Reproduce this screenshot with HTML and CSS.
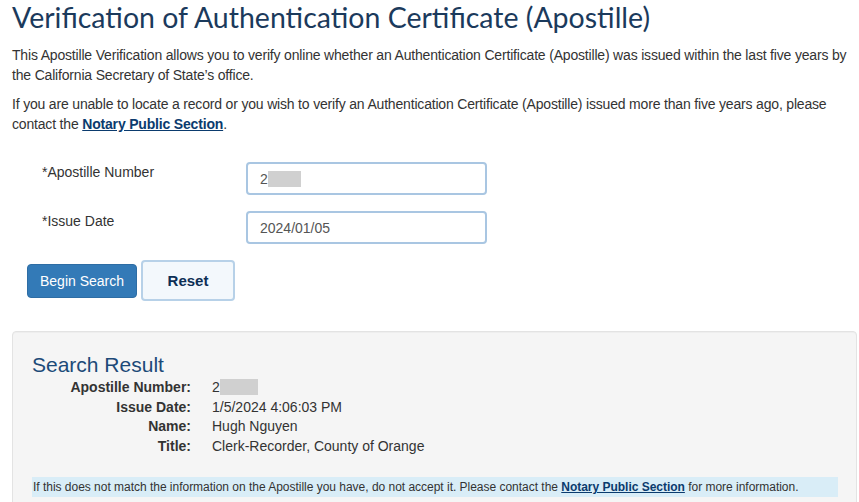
FILE: index.html
```html
<!DOCTYPE html>
<html>
<head>
<meta charset="utf-8">
<link rel="stylesheet" href="styles.css">
</head>
<body>
<div class="page">
  <h1 class="title">Verification of Authentication Certificate (Apostille)</h1>
  <p class="intro">This Apostille Verification allows you to verify online whether an Authentication Certificate (Apostille) was issued within the last five years by the California Secretary of State’s office.</p>
  <p class="intro">If you are unable to locate a record or you wish to verify an Authentication Certificate (Apostille) issued more than five years ago, please contact the <a href="#" class="link">Notary Public Section</a>.</p>

  <form class="form">
    <div class="row">
      <label class="label">*Apostille Number</label>
      <div class="input"><span>2</span><span class="redact"></span></div>
    </div>
    <div class="row">
      <label class="label">*Issue Date</label>
      <div class="input"><span>2024/01/05</span></div>
    </div>
    <div class="buttons">
      <button type="button" class="btn primary">Begin Search</button>
      <button type="button" class="btn reset">Reset</button>
    </div>
  </form>

  <div class="panel">
    <h2 class="result-title">Search Result</h2>
    <dl class="details">
      <dt>Apostille Number:</dt><dd>2<span class="redact small"></span></dd>
      <dt>Issue Date:</dt><dd>1/5/2024 4:06:03 PM</dd>
      <dt>Name:</dt><dd>Hugh Nguyen</dd>
      <dt>Title:</dt><dd>Clerk-Recorder, County of Orange</dd>
    </dl>
    <div class="notice">If this does not match the information on the Apostille you have, do not accept it. Please contact the <a href="#" class="link">Notary Public Section</a> for more information.</div>
  </div>
</div>
</body>
</html>
```

FILE: styles.css
```css
* { box-sizing: border-box; }
html, body { margin: 0; padding: 0; background: #fff; }
body {
  font-family: "Liberation Sans", Arial, sans-serif;
  font-size: 14px;
  color: #333;
  overflow: hidden;
}
.page {
  padding: 0 2px 0 12px;
}
.title {
  margin: 0;
  padding-top: 1px;
  font-family: "Lato", "Open Sans", sans-serif;
  font-weight: 400;
  font-size: 28.5px;
  line-height: 32px;
  color: #1b3a5c;
}
.intro {
  margin: 12px 0 0;
  line-height: 20px;
  letter-spacing: -0.18px;
  color: #333;
}
.intro + .intro { margin-top: 9px; }
.link {
  color: #0b3b6e;
  font-weight: 700;
  text-decoration: underline;
}
.form {
  margin-top: 28px;
}
.row {
  display: flex;
  align-items: flex-start;
  margin-bottom: 16px;
}
.label {
  width: 234px;
  padding-left: 30px;
  padding-top: 2px;
  line-height: 16px;
}
.input {
  width: 241px;
  height: 33px;
  border: 2px solid #a9c6e2;
  border-radius: 4px;
  padding: 0 12px;
  display: flex;
  align-items: center;
  color: #555;
}
.redact {
  display: inline-block;
  width: 33px;
  height: 16px;
  background: #d0d0d0;
  vertical-align: middle;
}
.buttons {
  display: flex;
  align-items: center;
  gap: 4px;
  margin-left: 15px;
  margin-top: 0;
}
.btn {
  font-family: "Liberation Sans", Arial, sans-serif;
  font-size: 14px;
  border-radius: 4px;
  cursor: pointer;
}
.primary {
  width: 110px;
  height: 34px;
  background: #337ab7;
  color: #fff;
  border: 1px solid #2e6da4;
}
.reset {
  width: 94px;
  height: 41px;
  background: #f3f8fc;
  color: #0d2f55;
  font-weight: 700;
  font-size: 15px;
  border: 2px solid #b7d1e8;
}
.panel {
  margin-top: 30px;
  background: #f5f5f5;
  border: 1px solid #e3e3e3;
  border-radius: 4px;
  padding: 20px 19px 30px;
  box-shadow: inset 0 1px 1px rgba(0,0,0,0.03);
}
.result-title {
  margin: 0;
  font-family: "Liberation Sans", Arial, sans-serif;
  font-weight: 400;
  font-size: 21px;
  line-height: 26px;
  color: #1c4a78;
}
.details {
  display: grid;
  grid-template-columns: 159px 1fr;
  column-gap: 21px;
  row-gap: 0;
  margin: 0;
  line-height: 19.5px;
}
.details dt {
  text-align: right;
  font-weight: 700;
  color: #333;
}
.details dd {
  margin: 0;
  color: #333;
}
.redact.small {
  width: 38px;
  height: 16px;
  margin-left: 0;
  vertical-align: -3px;
}
.notice {
  margin-top: 21px;
  width: 806px;
  background: #d9edf7;
  font-size: 12px;
  line-height: 20px;
  padding: 0 1px;
  color: #333;
  letter-spacing: -0.02px;
}
```
